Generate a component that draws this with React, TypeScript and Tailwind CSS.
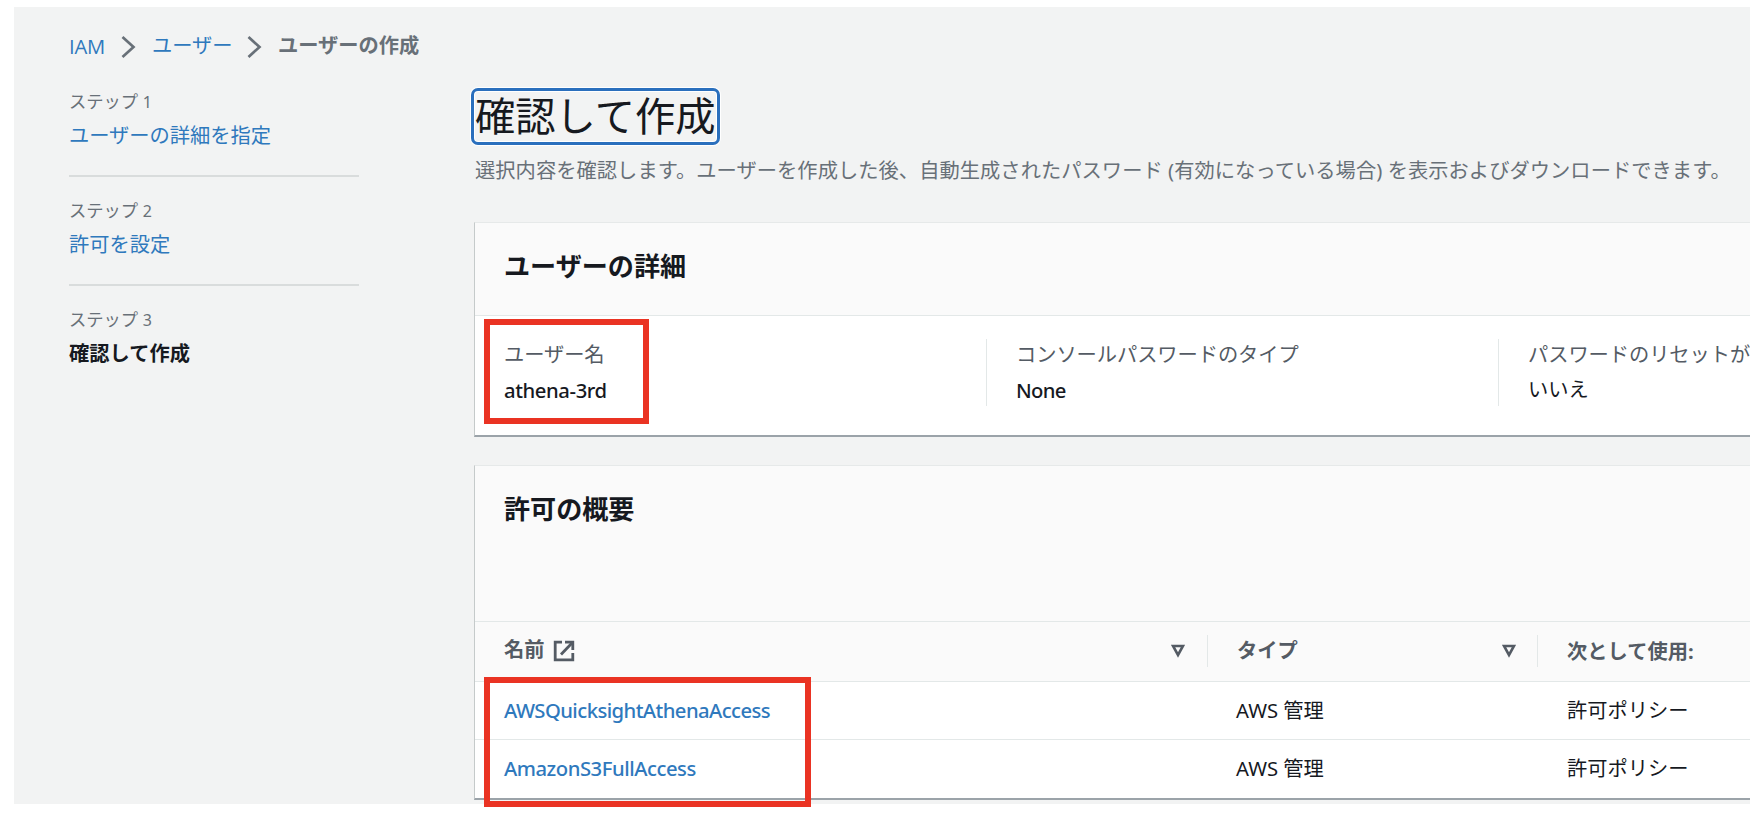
import type { ReactNode } from 'react';

const Chevron = () => (
  <svg className="h-6 w-4 shrink-0" viewBox="0 0 16 24" fill="none" stroke="#687078" strokeWidth="2.7">
    <path d="M1.5 2 L12.5 12 L1.5 22" />
  </svg>
);

const SortIcon = () => (
  <svg className="h-[14px] w-[14px]" viewBox="0 0 14 14" fill="none" stroke="#545b64" strokeWidth="2.6">
    <path d="M2 2 H12 L7 11 Z" />
  </svg>
);

const ExternalIcon = () => (
  <svg className="ml-2 h-[22px] w-[22px]" viewBox="0 0 22 22" fill="none" stroke="#545b64" strokeWidth="2.8">
    <path d="M9 2.2 H2.2 V19.8 H19.8 V13" />
    <path d="M12 2.2 H19.8 V10" />
    <path d="M19.5 2.5 L8 14.5" />
  </svg>
);

const Step = ({ label, number, children }: { label: string; number: number; children: ReactNode }) => (
  <li className="h-[109px]">
    <div className="h-8 pt-[1px] text-[17.3px] leading-8 text-[#687078]">
      {label} <span className="text-[16px]">{number}</span>
    </div>
    <div className="h-9 leading-9">{children}</div>
  </li>
);

const Divider = () => <li className="-mt-[19px] mb-[17px] h-[2px] bg-[#d9dcdc]" />;

const Field = ({ label, value, valueClass }: { label: string; value: string; valueClass: string }) => (
  <div>
    <div className="-mt-[1px] mb-[1px] h-8 leading-8 tracking-[-0.06px] text-[#545b64]">{label}</div>
    <div className={valueClass}>{value}</div>
  </div>
);

const policies = [
  { name: 'AWSQuicksightAthenaAccess', cls: 'tracking-[-0.57px]' },
  { name: 'AmazonS3FullAccess', cls: 'tracking-[-0.47px]' },
];

export default function App() {
  return (
    <div className="relative h-[824px] w-[1758px] overflow-hidden bg-white pl-[14px] pt-[7px] font-['Noto_Sans','Noto_Sans_CJK_JP',sans-serif] text-[20.25px] text-[#16191f]">
      <div className="h-[797px] w-[1736px] overflow-hidden bg-[#f2f3f3] pl-[55px] pt-[22px] whitespace-nowrap">
        <nav className="flex h-9 items-center">
          <a className="-mt-[1px] w-[52px] font-['Open_Sans',sans-serif] font-medium tracking-[-0.2px] text-[#2f79bd]">IAM</a>
          <Chevron />
          <a className="-mt-[3px] ml-[15px] w-[95px] text-[#2f79bd]">ユーザー</a>
          <Chevron />
          <span className="-mt-[3px] ml-[15px] font-bold text-[#687078]">ユーザーの作成</span>
        </nav>

        <div className="flex">
          <ol className="w-[290px] shrink-0 pt-[20px]">
            <Step label="ステップ" number={1}><a className="text-[#2f79bd]">ユーザーの詳細を指定</a></Step>
            <Divider />
            <Step label="ステップ" number={2}><a className="text-[#2f79bd]">許可を設定</a></Step>
            <Divider />
            <Step label="ステップ" number={3}><b>確認して作成</b></Step>
          </ol>

          <main className="ml-[112px] w-[1300px] shrink-0 pt-[23px]">
            <h1 className="flex h-[57px] w-[249px] items-center rounded-[7px] border-[3px] border-[#2a6fbd] pl-[1px] text-[40.3px] leading-none shadow-[0_0_0_1px_#ffffff,inset_0_0_0_1px_#ffffff]">
              確認して作成
            </h1>
            <p className="mt-[7px] h-9 pl-1 leading-9 tracking-[0.05px] text-[#687078]">
              選択内容を確認します。ユーザーを作成した後、自動生成されたパスワード (有効になっている場合) を表示およびダウンロードできます。
            </p>

            <section className="ml-[3px] mt-[34px] h-[215px] border-b-2 border-l border-t border-b-[#9ba3a9] border-l-[#c5caca] border-t-[#e6e9e9] bg-white">
              <div className="h-[93px] border-b border-[#e3e8e8] bg-[#fafafa] pl-[29px] pt-[23px]">
                <h2 className="h-10 text-[26.1px] font-bold leading-10">ユーザーの詳細</h2>
              </div>
              <div className="flex pl-[29px] pt-[23px]">
                <div className="h-[67px] w-[483px] shrink-0 border-r border-[#e3e8e8]">
                  <Field label="ユーザー名" value="athena-3rd" valueClass="h-9 pt-[1px] leading-9 font-medium tracking-[-0.4px]" />
                </div>
                <div className="h-[67px] w-[512px] shrink-0 border-r border-[#e3e8e8] pl-[29px]">
                  <Field label="コンソールパスワードのタイプ" value="None" valueClass="h-9 pt-[1px] leading-9 font-medium tracking-[-0.7px]" />
                </div>
                <div className="shrink-0 pl-[29px]">
                  <Field label="パスワードのリセットが" value="いいえ" valueClass="h-9 leading-9" />
                </div>
              </div>
            </section>

            <section className="ml-[3px] mt-[28px] h-[335px] border-b-2 border-l border-t border-b-[#9ba3a9] border-l-[#c5caca] border-t-[#e6e9e9] bg-white">
              <div className="h-[156px] border-b border-[#e3e8e8] bg-[#fafafa] pl-[29px] pt-[23px]">
                <h2 className="h-10 text-[26.1px] font-bold leading-10">許可の概要</h2>
              </div>
              <div className="flex h-[60px] items-center border-b border-[#e3e8e8] bg-[#fafafa] font-bold text-[#545b64]">
                <div className="-mt-[1px] flex h-8 w-[733px] items-center border-r border-[#e3e8e8] pl-[29px] pr-[22px]">
                  <span className="-mt-[3px]">名前</span>
                  <ExternalIcon />
                  <span className="ml-auto"><SortIcon /></span>
                </div>
                <div className="-mt-[1px] flex h-8 w-[330px] items-center justify-between border-r border-[#e3e8e8] pl-[29px] pr-[21px]">
                  <span className="-mt-[1px]">タイプ</span>
                  <SortIcon />
                </div>
                <div className="-mt-[1px] pl-[29px]">次として使用:</div>
              </div>
              {policies.map((p) => (
                <div key={p.name} className="flex h-[58px] items-center border-b border-[#e3e8e8] last:h-[57px] last:border-b-0">
                  <div className="w-[733px] pl-[29px] font-medium text-[#2f79bd]"><a className={p.cls}>{p.name}</a></div>
                  <div className="w-[330px] pl-[28px]">AWS 管理</div>
                  <div className="pl-[29px]">許可ポリシー</div>
                </div>
              ))}
            </section>
          </main>
        </div>
      </div>
      <div className="absolute left-[484px] top-[319px] h-[105px] w-[165px] border-[6px] border-[#ea3323]" />
      <div className="absolute left-[484px] top-[677px] h-[130px] w-[327px] border-[6px] border-[#ea3323]" />
    </div>
  );
}
